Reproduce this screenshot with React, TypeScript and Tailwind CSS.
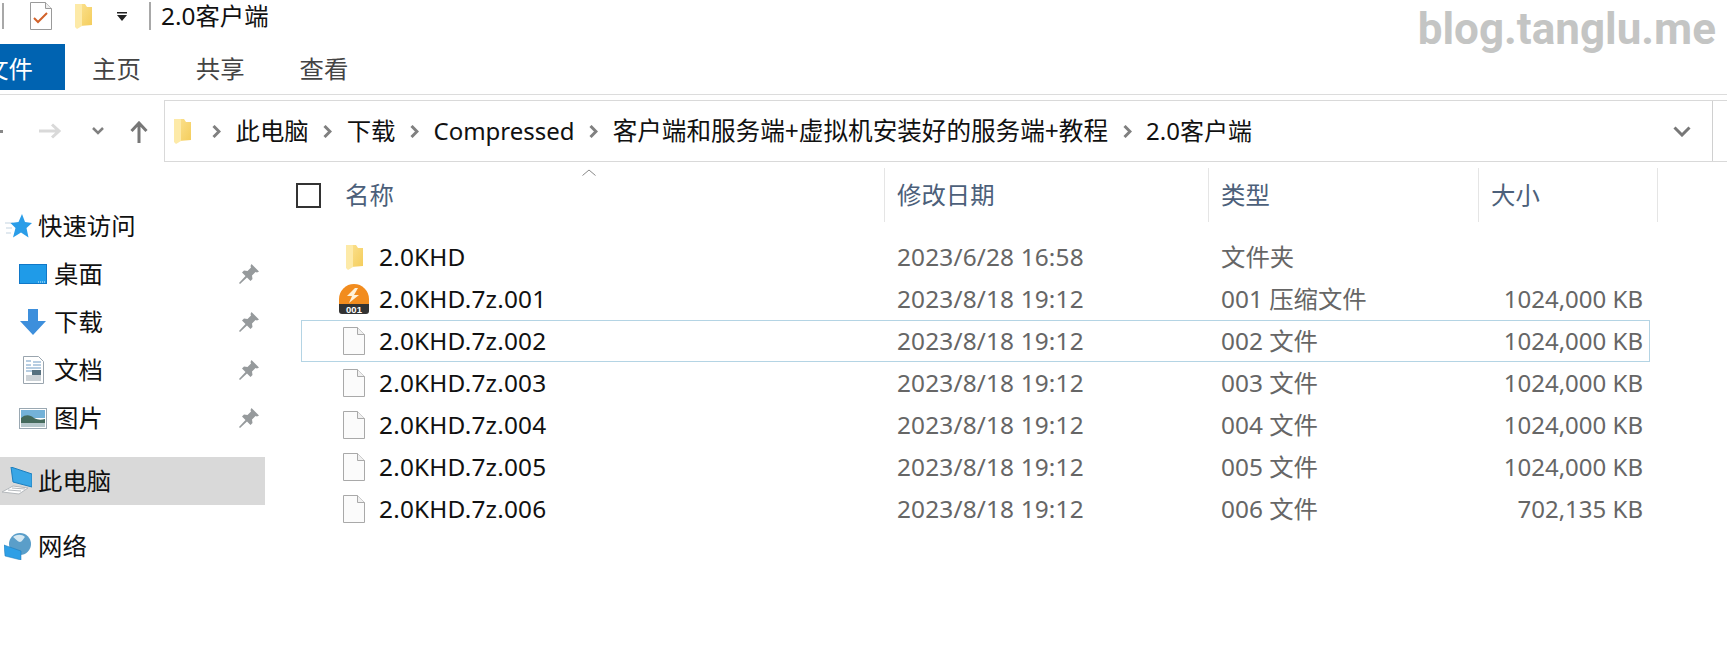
import React from "react";

const FolderIcon = ({ className = "" }: { className?: string }) => (
  <svg viewBox="0 0 18 26" className={className}>
    <defs>
      <linearGradient id="folderBody" x1="0" y1="0" x2="1" y2="1">
        <stop offset="0" stopColor="#fbe08c" />
        <stop offset="1" stopColor="#f4cd5c" />
      </linearGradient>
    </defs>
    <path d="M6 1h5l2 3h5v18L6 23z" fill="url(#folderBody)" />
    <path d="M1 1h6c1 0 1 .6 1 1.500V23l-5 3-2-2z" fill="#fdeaa8" />
  </svg>
);

const FileIcon = () => (
  <svg viewBox="0 0 22 28" className="w-[22px] h-[28px]">
    <path d="M.5.500h14l7 7v20H.5z" fill="#fbfbfb" stroke="#a9a9a9" />
    <path d="M14.500.500v7h7" fill="#f0f0f0" stroke="#a9a9a9" />
  </svg>
);

const ArchiveIcon = () => (
  <svg viewBox="0 0 30 30" className="w-[30px] h-[30px]">
    <path d="M0 15a15 15 0 0 1 30 0v6H0z" fill="#f28c1e" />
    <path d="M16 4l-8 8h5l-3 7 10-8h-5l4-7z" fill="#fff2d8" />
    <path d="M0 20h30v7c0 2-1 3-3 3H3c-2 0-3-1-3-3z" fill="#333" />
    <text x="15" y="28.500" textAnchor="middle" fontSize="9.500" fontWeight="700" fill="#fff" fontFamily="Liberation Sans">
      001
    </text>
  </svg>
);

const PinIcon = () => (
  <svg viewBox="0 0 20 20" className="w-[20px] h-[20px]">
    <path d="M12.500 0L20 7.500l-2 1-1.500-.5-3.500 3.500.5 3.500-2 2-3.500-3.500L1 20l-1-1 6.500-7L3 8.500l2-2 3.500.5L12 3.500 11.500 2z" fill="#969a9c" />
  </svg>
);

const Chevron = () => (
  <svg viewBox="0 0 9 13" className="w-[9px] h-[13px] shrink-0">
    <path d="M1.500 1l5.500 5.500-5.500 5.500" fill="none" stroke="#808080" strokeWidth="3" />
  </svg>
);

const StarIcon = () => (
  <svg viewBox="0 0 27 24" className="w-[27px] h-[24px]">
    <path d="M0 9h8M1 14h6M1 19h5" stroke="#c3d3e0" strokeWidth="1" />
    <path d="M17 0l3 8 7 1-5.500 5 2 9.500-7.500-5-8 5 2.500-9.500-5-5 8-1z" fill="#2a9de8" />
  </svg>
);

const DesktopIcon = () => (
  <svg viewBox="0 0 28 20" className="w-[28px] h-[20px]">
    <rect x=".5" y=".5" width="27" height="19" fill="#1f9be8" stroke="#1078c8" />
    <path d="M19 18h7" stroke="#d5eefc" strokeWidth="1" strokeDasharray="1 1" />
  </svg>
);

const DownloadIcon = () => (
  <svg viewBox="0 0 26 26" className="w-[26px] h-[26px]">
    <path d="M8 0h10v12h8L13 26 0 12h8z" fill="#3d8fdc" />
  </svg>
);

const DocIcon = () => (
  <svg viewBox="0 0 21 28" className="w-[21px] h-[28px]">
    <path d="M.5.500h15l5 5v22H.5z" fill="#fff" stroke="#9aa5ae" />
    <path d="M3 5h5M3 9h5M10 6h8M10 9h8M3 12h15M3 15h15" stroke="#6f9bc4" strokeWidth="1" />
    <rect x="9" y="14" width="9" height="5" fill="#56707f" />
    <path d="M3 20h15M3 22h15M3 24h15" stroke="#9aa5ae" strokeWidth="1" />
  </svg>
);

const PictureIcon = () => (
  <svg viewBox="0 0 28 21" className="w-[28px] h-[21px]">
    <rect x=".5" y=".5" width="27" height="20" fill="#fff" stroke="#9aa8b2" />
    <rect x="2" y="2" width="24" height="8" fill="#74b2d8" />
    <path d="M2 10c5-4 9-3 13 0 4 2 7 2 11 1v8H2z" fill="#446a5c" />
    <rect x="2" y="15" width="24" height="4" fill="#b6c8cc" />
  </svg>
);

const PcIcon = () => (
  <svg viewBox="0 0 30 28" className="w-[30px] h-[28px]">
    <path d="M9 0l21 7v13L11 15z" fill="#38a6e6" stroke="#1d7fbe" />
    <path d="M0 25l11-6 15 2-9 6z" fill="#fff" stroke="#b4b8bc" strokeWidth="1" />
    <path d="M6 23l13 1M10 21l13 1" stroke="#b4b8bc" strokeWidth="1" />
  </svg>
);

const NetworkIcon = () => (
  <svg viewBox="0 0 27 27" className="w-[27px] h-[27px]">
    <circle cx="16" cy="11" r="11" fill="#5a9ec9" />
    <path d="M9 4c4-3 9-3 12 0-2 2-3 5-5 5s-4-3-7-5z" fill="#d5e8f2" />
    <path d="M0 12l17 6v9L1 23z" fill="#2e9fe6" stroke="#1b76b5" strokeWidth=".5" />
  </svg>
);

const sidebarTop = [
  { icon: <DesktopIcon />, label: "桌面" },
  { icon: <DownloadIcon />, label: "下载" },
  { icon: <DocIcon />, label: "文档" },
  { icon: <PictureIcon />, label: "图片" },
];

const files = [
  { name: "2.0KHD", date: "2023/6/28 16:58", type: "文件夹", size: "", icon: <FolderIcon className="w-[18px] h-[26px]" /> },
  { name: "2.0KHD.7z.001", date: "2023/8/18 19:12", type: "001 压缩文件", size: "1024,000 KB", icon: <ArchiveIcon /> },
  { name: "2.0KHD.7z.002", date: "2023/8/18 19:12", type: "002 文件", size: "1024,000 KB", icon: <FileIcon />, focus: true },
  { name: "2.0KHD.7z.003", date: "2023/8/18 19:12", type: "003 文件", size: "1024,000 KB", icon: <FileIcon /> },
  { name: "2.0KHD.7z.004", date: "2023/8/18 19:12", type: "004 文件", size: "1024,000 KB", icon: <FileIcon /> },
  { name: "2.0KHD.7z.005", date: "2023/8/18 19:12", type: "005 文件", size: "1024,000 KB", icon: <FileIcon /> },
  { name: "2.0KHD.7z.006", date: "2023/8/18 19:12", type: "006 文件", size: "702,135 KB", icon: <FileIcon /> },
];

const App = () => {
  return (
    <div className="relative w-[1727px] h-[661px] overflow-hidden bg-white text-[24.4px] leading-none text-[#111] [font-family:'Noto_Sans','Noto_Sans_CJK_SC',sans-serif]">
      {/* title bar */}
      <div className="flex items-center h-[44px] pb-[12px]">
        <div className="w-[2px] h-[26px] ml-[2px] bg-[#a8a8a8]" />
        <svg viewBox="0 0 22 28" className="w-[22px] h-[28px] ml-[26px]">
          <path d="M.5.500h15l6 6v21H.5z" fill="#fff" stroke="#9a9a9a" />
          <path d="M15.500.500v6h6" fill="#eee" stroke="#9a9a9a" />
          <path d="M4 16l4 4 9-9" fill="none" stroke="#d2622a" strokeWidth="2" />
        </svg>
        <FolderIcon className="w-[18px] h-[26px] ml-[22px]" />
        <svg viewBox="0 0 10 9" className="w-[10px] h-[9px] ml-[25px]">
          <path d="M0 0h10v1.500H0zM0 3h10L5 9z" fill="#222" />
        </svg>
        <div className="w-[2px] h-[28px] ml-[22px] bg-[#a8a8a8]" />
        <div className="ml-[10px]">2.0客户端</div>
      </div>

      {/* ribbon tabs */}
      <div className="flex items-center h-[46px] text-[#444]">
        <div className="flex items-center justify-end w-[65px] h-full pr-[32px] pt-[5px] overflow-hidden bg-[#0063b1] text-white whitespace-nowrap">
          文件
        </div>
        <div className="ml-[27px] pt-[5px]">主页</div>
        <div className="ml-[55px] pt-[5px]">共享</div>
        <div className="ml-[55px] pt-[5px]">查看</div>
      </div>
      <div className="mt-[4px] h-px bg-[#dcdcdc]" />

      {/* nav + address bar */}
      <div className="flex mt-[5px] h-[62px]">
        <div className="relative w-[164px] shrink-0">
          <div className="absolute left-0 top-[30px] w-[3px] h-[3px] bg-[#888]" />
          <svg viewBox="0 0 22 16" className="absolute left-[39px] top-[23px] w-[22px] h-[16px]">
            <path d="M0 8h19M13 1.500L20 8l-7 6.500" fill="none" stroke="#d9d9d9" strokeWidth="3" />
          </svg>
          <svg viewBox="0 0 12 8" className="absolute left-[92px] top-[27px] w-[12px] h-[8px]">
            <path d="M1 1l5 5 5-5" fill="none" stroke="#808080" strokeWidth="2.500" />
          </svg>
          <svg viewBox="0 0 18 22" className="absolute left-[130px] top-[21px] w-[18px] h-[22px]">
            <path d="M9 22V3M1.500 10L9 2l7.500 8" fill="none" stroke="#777" strokeWidth="3" />
          </svg>
        </div>
        <div className="flex flex-1 items-center pl-[8px] border border-[#d9d9d9] border-r-0">
          <FolderIcon className="w-[18px] h-[26px] shrink-0" />
          <div className="flex items-center gap-[14.5px] ml-[21px] whitespace-nowrap">
            <Chevron />
            <span>此电脑</span>
            <Chevron />
            <span>下载</span>
            <Chevron />
            <span className="text-[24px]">Compressed</span>
            <Chevron />
            <span className="text-[24.6px]">客户端和服务端+虚拟机安装好的服务端+教程</span>
            <Chevron />
            <span className="text-[24px]">2.0客户端</span>
          </div>
          <div className="flex items-center ml-auto h-full">
            <svg viewBox="0 0 18 11" className="w-[18px] h-[11px] mr-[21px]">
              <path d="M1.500 1.500L9 9l7.500-7.500" fill="none" stroke="#777" strokeWidth="3" />
            </svg>
            <div className="w-px h-full bg-[#d0d0d0]" />
            <div className="w-[14px]" />
          </div>
        </div>
      </div>

      <div className="flex">
        {/* sidebar */}
        <div className="w-[270px] shrink-0 pt-[40px] pr-[5px]">
          <div className="flex items-center h-[48px] pl-[5px] gap-[6px]">
            <StarIcon />
            <span>快速访问</span>
          </div>
          {sidebarTop.map((item) => (
            <div key={item.label} className="flex items-center h-[48px]">
              <div className="flex justify-center w-[54px] pl-[12px]">{item.icon}</div>
              <span>{item.label}</span>
              <div className="ml-auto mr-[6px]">
                <PinIcon />
              </div>
            </div>
          ))}
          <div className="flex items-center h-[48px] mt-[15px] pl-[2px] gap-[6px] bg-[#d9d9d9]">
            <PcIcon />
            <span>此电脑</span>
          </div>
          <div className="flex items-center h-[48px] mt-[17px] pl-[4px] gap-[7px]">
            <NetworkIcon />
            <span>网络</span>
          </div>
        </div>

        {/* file list */}
        <div className="relative flex-1 pl-[31px] pt-[6px]">
          <svg viewBox="0 0 14 7" className="absolute left-[312px] top-[7px] w-[14px] h-[7px]">
            <path d="M.5 6.500L7 1l6.500 5.500" fill="none" stroke="#888" />
          </svg>
          <div className="grid grid-cols-[583px_324px_270px_180px] h-[54px] text-[#4c607a]">
            <div className="flex items-center">
              <div className="w-[25px] h-[25px] -ml-[5px] border-2 border-[#333]" />
              <span className="ml-[24px]">名称</span>
            </div>
            <div className="flex items-center pl-[12px] border-l border-[#e5e5e5]">修改日期</div>
            <div className="flex items-center pl-[12px] border-l border-[#e5e5e5]">类型</div>
            <div className="flex items-center pl-[12px] border-x border-[#e5e5e5]">大小</div>
          </div>
          <div className="mt-[14px] w-[1349px]">
            {files.map((f) => (
              <div
                key={f.name}
                className={
                  f.focus
                    ? "grid grid-cols-[583px_324px_270px_1fr] items-center h-[42px] border border-[#b4d4e4]"
                    : "grid grid-cols-[583px_324px_270px_1fr] items-center h-[42px] border border-transparent"
                }
              >
                <div className="flex items-center">
                  <div className="flex justify-center w-[32px] ml-[36px]">{f.icon}</div>
                  <span className="ml-[9px] tracking-[0.2px]">{f.name}</span>
                </div>
                <div className="pl-[12px] text-[#666] tracking-[0.15px]">{f.date}</div>
                <div className="pl-[12px] text-[#666]">{f.type}</div>
                <div className="pr-[6px] text-right text-[24px] text-[#666]">{f.size}</div>
              </div>
            ))}
          </div>
        </div>
      </div>

      {/* watermark */}
      <div className="absolute right-[11px] top-[3px] text-[44px] leading-[52px] font-bold text-[#c4c5c4] [font-family:'Roboto',sans-serif]">
        blog.tanglu.me
      </div>
    </div>
  );
};

export default App;
